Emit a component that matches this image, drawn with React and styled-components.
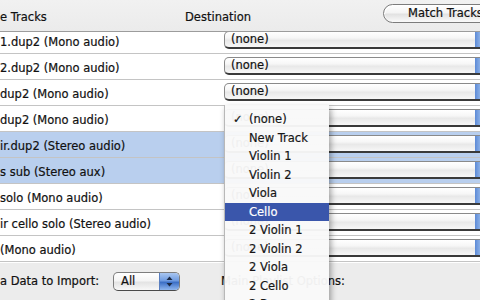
import React from 'react';
import styled, { createGlobalStyle } from 'styled-components';

const Global = createGlobalStyle`
  html, body { margin: 0; padding: 0; background: #ececec; }
  body { font-family: "DejaVu Sans", "Liberation Sans", sans-serif; }
`;

const Window = styled.div`
  position: relative;
  width: 480px;
  height: 300px;
  overflow: hidden;
  background: #ececec;
  font-size: 11.5px;
  color: #111;
  -webkit-text-stroke: 0.2px currentColor;
  display: flex;
  flex-direction: column;
`;

const Header = styled.div`
  flex: none;
  height: 31px;
  border-bottom: 1px solid #9c9c9c;
  background: linear-gradient(#f1f1f1, #ebebeb);
  display: flex;
  align-items: flex-start;
  position: relative;
  z-index: 1;
`;

const HeaderLabel = styled.div`
  flex: none;
  width: ${(p) => p.$w}px;
  padding-top: 10px;
  line-height: 14px;
  white-space: nowrap;
`;

const MatchButton = styled.div`
  flex: none;
  margin-top: 4px;
  height: 19px;
  width: 120px;
  box-sizing: border-box;
  border: 1px solid #7c7c7c;
  border-radius: 10px;
  padding-left: 24px;
  line-height: 17px;
  white-space: nowrap;
  background: linear-gradient(#ffffff, #f4f4f4 45%, #e2e2e2 55%, #fafafa);
  box-shadow: inset 1px 1px 0 #fff;
`;

const TableView = styled.div`
  flex: none;
  height: 231px;
  overflow: hidden;
  background: #fff;
`;

const RowList = styled.div`
  margin-top: -4px;
`;

const Row = styled.div`
  height: 25px;
  border-bottom: 1px solid #c4c4c4;
  background: ${(p) => (p.$sel ? '#b9cfee' : '#ffffff')};
  display: grid;
  grid-template-columns: 224px 1fr;
  align-items: start;
`;

const SourceCell = styled.div`
  padding-top: 1px;
  line-height: 26px;
  white-space: nowrap;
  overflow: hidden;
`;

const Popup = styled.div`
  margin-top: 3px;
  margin-right: -14px;
  height: 18px;
  box-sizing: border-box;
  display: flex;
  border: 1px solid #8a8a8a;
  border-bottom: 2px solid #3a3a3a;
  border-radius: 5px 0 0 5px;
  overflow: hidden;
  background: linear-gradient(#ffffff, #f6f6f6 40%, #e8e8e8 55%, #f7f7f7);
`;

const PopupText = styled.div`
  flex: 1;
  padding-left: 6px;
  line-height: 15px;
  white-space: nowrap;
`;

const PopupArrows = styled.div`
  flex: none;
  width: ${(p) => p.$w}px;
  background: linear-gradient(90deg, #5c8ad6, #9fc0ee 40%, #3e72c8);
`;

const BottomBar = styled.div`
  flex: 1;
  display: flex;
  align-items: center;
  padding-bottom: 1px;
`;

const BottomLabel = styled.div`
  flex: none;
  white-space: nowrap;
  margin-right: ${(p) => p.$gap}px;
`;

const SmallPopup = styled.div`
  flex: none;
  width: 67px;
  height: 19px;
  box-sizing: border-box;
  display: flex;
  border: 1px solid #7e7e7e;
  border-bottom-color: #4a4a4a;
  border-radius: 5px;
  overflow: hidden;
  margin-right: 41px;
  background: linear-gradient(#ffffff, #f5f5f5 45%, #e4e4e4 55%, #f8f8f8);
`;

const SmallPopupText = styled.div`
  flex: 1;
  padding-left: 7px;
  line-height: 17px;
`;

const Stepper = styled.div`
  flex: none;
  width: 19px;
  display: flex;
  align-items: center;
  justify-content: center;
  background: linear-gradient(#a9c6f0, #6f9be0 45%, #3c6fc6 55%, #8fb6ee);
  border-left: 1px solid #5a7fc0;
`;

const Menu = styled.div`
  position: absolute;
  left: 224px;
  top: 105px;
  width: 105px;
  bottom: -20px;
  box-sizing: border-box;
  padding-top: 5px;
  background: rgba(249, 249, 249, 0.96);
  border-left: 1px solid #b8b8b8;
  box-shadow: 2px 3px 6px rgba(0, 0, 0, 0.35);
  z-index: 2;
`;

const MenuItem = styled.div`
  height: 18.5px;
  line-height: 18.5px;
  display: flex;
  padding-left: 8px;
  white-space: nowrap;
  background: ${(p) => (p.$active ? '#3a56ab' : 'transparent')};
  color: ${(p) => (p.$active ? '#ffffff' : '#161616')};
`;

const Check = styled.span`
  flex: none;
  width: 16px;
`;

const sources = [
  { t: '1.dup2 (Mono audio)' },
  { t: '2.dup2 (Mono audio)' },
  { t: 'dup2 (Mono audio)' },
  { t: 'dup2 (Mono audio)' },
  { t: 'ir.dup2 (Stereo audio)', sel: true },
  { t: 's sub (Stereo aux)', sel: true },
  { t: 'solo (Mono audio)' },
  { t: 'ir cello solo (Stereo audio)' },
  { t: '(Mono audio)' },
];

const items = [
  '(none)',
  'New Track',
  'Violin 1',
  'Violin 2',
  'Viola',
  'Cello',
  '2 Violin 1',
  '2 Violin 2',
  '2 Viola',
  '2 Cello',
  '2 Bass',
];

export default function App() {
  return (
    <>
      <Global />
      <Window>
        <Header>
          <HeaderLabel $w={185}>e Tracks</HeaderLabel>
          <HeaderLabel $w={198}>Destination</HeaderLabel>
          <MatchButton>Match Tracks</MatchButton>
        </Header>
        <TableView>
          <RowList>
            {sources.map((s, i) => (
              <Row key={i} $sel={s.sel}>
                <SourceCell>{s.t}</SourceCell>
                <Popup>
                  <PopupText>(none)</PopupText>
                  <PopupArrows $w={18} />
                </Popup>
              </Row>
            ))}
          </RowList>
        </TableView>
        <BottomBar>
          <BottomLabel $gap={14}>a Data to Import:</BottomLabel>
          <SmallPopup>
            <SmallPopupText>All</SmallPopupText>
            <Stepper>
              <svg width="7" height="11" viewBox="0 0 7 11">
                <path d="M3.5 0.5 L6.5 4 L0.5 4 Z" fill="#1c2a44" />
                <path d="M3.5 10.5 L6.5 7 L0.5 7 Z" fill="#1c2a44" />
              </svg>
            </Stepper>
          </SmallPopup>
          <BottomLabel $gap={0}>Main Playlist Options:</BottomLabel>
        </BottomBar>
        <Menu>
          {items.map((it, i) => (
            <MenuItem key={it} $active={it === 'Cello'}>
              <Check>{i === 0 ? '✓' : ''}</Check>
              {it}
            </MenuItem>
          ))}
        </Menu>
      </Window>
    </>
  );
}
